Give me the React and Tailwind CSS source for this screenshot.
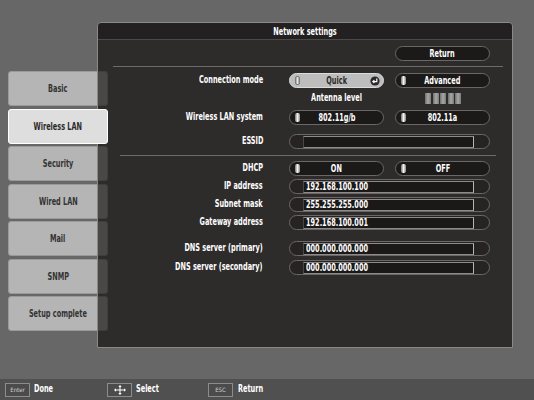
import React from "react";

const tabs = ["Basic", "Wireless LAN", "Security", "Wired LAN", "Mail", "SNMP", "Setup complete"];

// the reference uses a tall, very narrow bitmap face: squeeze the text horizontally
function T({ children, origin = "center" }) {
  const o = origin === "right" ? "origin-right" : origin === "left" ? "origin-left" : "origin-center";
  return <span className={`inline-block whitespace-nowrap leading-none scale-x-[0.66] ${o}`}>{children}</span>;
}

function Knob({ light }) {
  return (
    <span
      className={
        light
          ? "absolute left-[5px] top-[2px] w-[5px] h-[9px] rounded-[2px] border border-[#7a7a7a] bg-gradient-to-r from-[#9a9a9a] via-[#e8e8e8] to-[#9a9a9a]"
          : "absolute left-[5px] top-[2px] w-[5px] h-[9px] rounded-[2px] bg-gradient-to-r from-[#777] via-[#f2f2f2] to-[#888]"
      }
    />
  );
}

function EnterIcon() {
  return (
    <svg className="absolute right-[3px] top-[2px]" width="10" height="10" viewBox="0 0 10 10">
      <circle cx="5" cy="5" r="4.6" fill="#2a2828" />
      <path d="M6.8 2.6 V5.6 H3.4" stroke="#fff" strokeWidth="1.2" fill="none" />
      <path d="M4.4 4.2 L2.8 5.6 L4.4 7" stroke="#fff" strokeWidth="1.1" fill="none" />
    </svg>
  );
}

function Btn({ children, light, enter }) {
  return (
    <div
      className={`relative w-[95px] h-[15px] rounded-full border flex items-center justify-center ${
        light ? "bg-[#bdbdbd] border-[#dcdcdc] text-[#2a2a2a]" : "bg-[#1c1919] border-[#6b6767] text-white"
      }`}
    >
      <Knob light={light} />
      <T>{children}</T>
      {enter && <EnterIcon />}
    </div>
  );
}

function Field({ value }) {
  return (
    <div className="w-[201px] h-[15px] rounded-full border border-[#6b6767] bg-[#272323] flex items-center pl-[13px] pr-[15px]">
      <div className="flex-1 h-[12px] border border-[#8e8a8a] border-l-[#4a4646] border-r-[#b8b4b4] bg-[#1b1818] text-white pl-[2px] flex items-center">
        <T origin="left">{value}</T>
      </div>
    </div>
  );
}

function Row({ label, children, className = "" }) {
  return (
    <div className={`flex items-center h-[15px] ${className}`}>
      <div className="w-[165px] text-right text-white">
        <T origin="right">{label}</T>
      </div>
      <div className="ml-[26px] flex gap-[11px]">{children}</div>
    </div>
  );
}

function Key({ children }) {
  return (
    <div className="w-[25px] h-[14px] border border-[#8c8c8c] bg-[#4b4b4b] flex items-center justify-center text-[6px] font-normal text-[#cfcfcf]">
      {children}
    </div>
  );
}

export default function App() {
  return (
    <div className="w-[534px] h-[400px] bg-[#676767] flex flex-col overflow-hidden font-['Liberation_Sans_Narrow','DejaVu_Sans_Condensed','Liberation_Sans',sans-serif] font-bold text-[11px]">
      <div className="flex-1 flex pt-[22px]">
        <div className="mt-[49px] ml-[8px] w-[100px] flex flex-col gap-[2.5px]">
          {tabs.map((t) => (
            <div
              key={t}
              className={
                t === "Wireless LAN"
                  ? "relative z-10 h-[35px] rounded-[3px] bg-[#dedede] border border-white flex items-center justify-center text-[#2a2a2a]"
                  : "h-[35px] rounded-[3px] bg-[#b5b5b5] border border-[#9a9a9a] flex items-center justify-center text-[#333]"
              }
            >
              <T>{t}</T>
            </div>
          ))}
        </div>

        <div className="ml-[-11px] w-[416px] h-[326px] rounded-t-[4px] border border-[#8c8888] bg-[rgba(14,10,10,0.64)] flex flex-col">
          <div className="h-[17px] bg-black/25 border-b border-[#4d4949] flex items-center justify-center text-white rounded-t-[3px]">
            <T>Network settings</T>
          </div>

          <div className="mt-[6px] pl-[297px]">
            <div className="w-[95px] h-[15px] rounded-full border border-[#6b6767] bg-[#1c1919] flex items-center justify-center text-white">
              <T>Return</T>
            </div>
          </div>

          <div className="mt-[5px] ml-[15px] mr-[9px] h-px bg-[#6e6a6a]" />

          <Row label="Connection mode" className="mt-[6px]">
            <Btn light enter>Quick</Btn>
            <Btn>Advanced</Btn>
          </Row>

          <div className="mt-[5px] flex items-center h-[11px]">
            <div className="w-[191px]" />
            <div className="w-[95px] text-center text-white">
              <T>Antenna level</T>
            </div>
            <div className="ml-[41px] flex gap-[1.5px]">
              {[0, 1, 2, 3, 4].map((i) => (
                <span key={i} className="w-[6px] h-[11px] bg-gradient-to-r from-[#6f6f6f] via-[#a8a8a8] to-[#7a7a7a]" />
              ))}
            </div>
          </div>

          <Row label="Wireless LAN system" className="mt-[6px]">
            <Btn>802.11g/b</Btn>
            <Btn>802.11a</Btn>
          </Row>

          <Row label="ESSID" className="mt-[9px]">
            <Field value="" />
          </Row>

          <div className="mt-[6px] ml-[22px] mr-[16px] h-px bg-[#6e6a6a]" />

          <Row label="DHCP" className="mt-[5px]">
            <Btn>ON</Btn>
            <Btn>OFF</Btn>
          </Row>
          <Row label="IP address" className="mt-[3px]">
            <Field value="192.168.100.100" />
          </Row>
          <Row label="Subnet mask" className="mt-[3px]">
            <Field value="255.255.255.000" />
          </Row>
          <Row label="Gateway address" className="mt-[3px]">
            <Field value="192.168.100.001" />
          </Row>
          <Row label="DNS server (primary)" className="mt-[11px]">
            <Field value="000.000.000.000" />
          </Row>
          <Row label="DNS server (secondary)" className="mt-[4px]">
            <Field value="000.000.000.000" />
          </Row>
        </div>
      </div>

      <div className="h-[21px] bg-[#505050] flex items-center text-white pl-[5px]">
        <div className="w-[102px] flex items-center">
          <Key>Enter</Key>
          <span className="ml-[4px]">
            <T origin="left">Done</T>
          </span>
        </div>
        <div className="w-[101px] flex items-center">
          <div className="w-[25px] h-[14px] border border-[#8c8c8c] bg-[#4b4b4b] flex items-center justify-center">
            <svg width="12" height="10" viewBox="0 0 12 10">
              <path d="M1 5 H11 M6 0.8 V9.2" stroke="#fff" strokeWidth="1" />
              <path d="M6 0 L4.3 2 H7.7 Z M6 10 L4.3 8 H7.7 Z M0 5 L2 3.3 V6.7 Z M12 5 L10 3.3 V6.7 Z" fill="#fff" />
            </svg>
          </div>
          <span className="ml-[4px]">
            <T origin="left">Select</T>
          </span>
        </div>
        <div className="flex items-center">
          <Key>ESC</Key>
          <span className="ml-[5px]">
            <T origin="left">Return</T>
          </span>
        </div>
      </div>
    </div>
  );
}
